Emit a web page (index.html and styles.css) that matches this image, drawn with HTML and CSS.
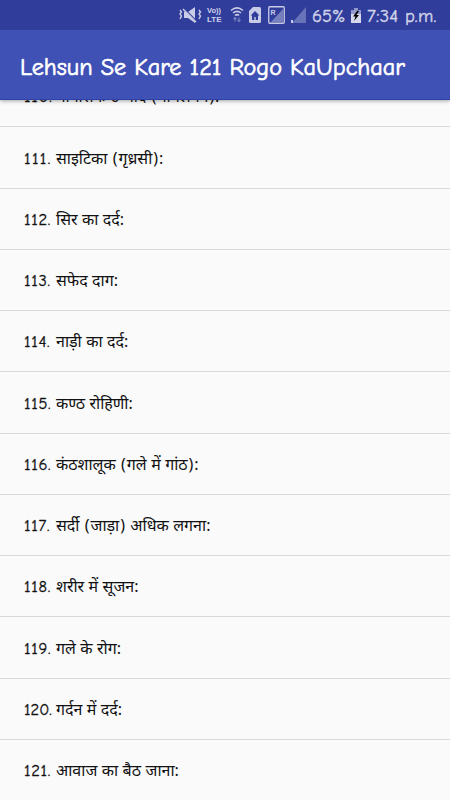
FILE: index.html
```html
<!DOCTYPE html>
<html lang="hi">
<head>
<meta charset="utf-8">
<title>Lehsun Se Kare 121 Rogo KaUpchaar</title>
<link rel="stylesheet" href="styles.css">
</head>
<body>
<header class="top">
  <div class="status">
    <svg class="mute" width="24" height="18" viewBox="0 0 24 18"><path d="M5 6h4l7-5v16l-7-5H5z" fill="#c9cce6"/><path d="M5.500 3l12 12" stroke="#303d9b" stroke-width="1.2"/><path d="M4 3l13 13" stroke="#c9cce6" stroke-width="1.5"/><path d="M1 4l1.5 2L1 8l1.5 2L1 13M20 4l1.5 2L20 8l1.5 2L20 13" fill="none" stroke="#c9cce6" stroke-width="1.4"/></svg>
    <span class="volte"><span>Vo))</span><span class="lte">LTE</span></span>
    <svg class="wifi" width="14" height="16" viewBox="0 0 14 16"><path d="M1 3.500Q7-1.800 13 3.500M3 6Q7 2.700 11 6M5 8.500Q7 6.600 9 8.500" fill="none" stroke="#c9cce6" stroke-width="1.6"/><path d="M5 10.500v4M3.500 12L5 10.500 6.500 12M9 10.500v4M7.500 13L9 14.500 10.500 13" fill="none" stroke="#7780bf" stroke-width="1.200"/></svg>
    <svg class="sim" width="12" height="16" viewBox="0 0 12 16"><path d="M4 0h6.500Q12 0 12 1.500v13Q12 16 10.500 16h-9Q0 16 0 14.500V4z" fill="#c9cce6"/><path d="M6 4L1.500 8.500H3V13h2.300v-3h1.400v3H9V8.500h1.500z" fill="#303d9b"/></svg>
    <svg class="roam" width="17" height="18" viewBox="0 0 17 18"><rect x=".75" y=".75" width="15.500" height="16.500" rx="1" fill="none" stroke="#c9cce6" stroke-width="1.300"/><path d="M15 3v13H3z" fill="#7780bf"/><text class="roam-label" x="2.500" y="9">R</text></svg>
    <svg class="signal" width="15" height="16" viewBox="0 0 15 16"><path d="M15 0v16H1z" fill="#6873b9"/><path d="M0 13h2v3H0z" fill="#c9cce6"/></svg>
    <span class="percent">65%</span>
    <svg class="battery" width="10" height="15" viewBox="0 0 10 15"><path d="M3 0h4v2h3v5H0V2h3z" fill="#9299ca"/><path d="M0 6h10v9H0z" fill="#d7d9ed"/><path d="M6.500 2.500L2 8.500h2.500L3 13l5-6H5.500L8 3z" fill="#000"/></svg>
    <span class="clock">7:34 p.m.</span>
  </div>
  <h1 class="title">Lehsun Se Kare 121 Rogo KaUpchaar</h1>
</header>
<ul class="list">
  <li><span class="num">110.</span><span>मानसिक उन्माद <span class="paren">(</span>पागलपन<span class="paren">)</span>:</span></li>
  <li><span class="num ones">111.</span><span>साइटिका <span class="paren">(</span>गृध्रसी<span class="paren">)</span>:</span></li>
  <li><span class="num">112.</span><span>सिर का दर्द:</span></li>
  <li><span class="num">113.</span><span>सफेद दाग:</span></li>
  <li><span class="num">114.</span><span>नाड़ी का दर्द:</span></li>
  <li><span class="num">115.</span><span>कण्ठ रोहिणी:</span></li>
  <li><span class="num">116.</span><span>कंठशालूक <span class="paren">(</span>गले में गांठ<span class="paren">)</span>:</span></li>
  <li><span class="num">117.</span><span>सर्दी <span class="paren">(</span>जाड़ा<span class="paren">)</span> अधिक लगना:</span></li>
  <li><span class="num">118.</span><span>शरीर में सूजन:</span></li>
  <li><span class="num">119.</span><span>गले के रोग:</span></li>
  <li><span class="num wide">120.</span><span>गर्दन में दर्द:</span></li>
  <li><span class="num">121.</span><span>आवाज का बैठ जाना:</span></li>
</ul>
</body>
</html>
```
FILE: styles.css
```css
* { box-sizing: border-box; }
body {
  margin: 0;
  height: 800px;
  overflow: hidden;
  background: #fafafa;
  font-family: "Noto Sans", sans-serif;
}
.top {
  position: relative;
  z-index: 1;
  height: 100px;
  background: #3f51b5;
  border-bottom: 1px solid #2c40a8;
  box-shadow: 0 1px 4px rgba(0, 0, 0, .35);
  color: #fff;
  font-family: "Comic Neue", "Comic Sans MS", fantasy;
}
.status {
  display: flex;
  align-items: center;
  height: 30px;
  padding-left: 179px;
  background: #303d9b;
  color: #d0d3ea;
  white-space: nowrap;
}
.status svg { flex: none; }
.volte {
  display: flex;
  flex-direction: column;
  width: 16px;
  margin-left: 4px;
  font: bold 7.5px/9px "Liberation Sans", sans-serif;
}
.lte { font-size: 8px; }
.wifi { margin-left: 7px; }
.sim { margin-left: 5px; }
.roam { margin-left: 7px; }
.roam-label { font: bold 7px "Liberation Sans", sans-serif; fill: #c9cce6; }
.signal { margin-left: 6px; }
.percent, .clock {
  padding-top: 2px;
  font-size: 18.5px;
  line-height: 28px;
  -webkit-text-stroke: .4px;
}
.percent { width: 33px; margin-left: 6px; }
.battery { margin-left: 6px; }
.clock { margin-left: 6px; letter-spacing: .3px; }
.title {
  margin: 0;
  padding: 2px 0 0 20px;
  font-size: 24.2px;
  font-weight: 400;
  line-height: 70px;
  white-space: nowrap;
  -webkit-text-stroke: .7px;
}
.list {
  margin: -34px 0 0;
  padding: 0;
  list-style: none;
}
.list li {
  display: flex;
  align-items: baseline;
  height: 61.25px;
  padding: 18.25px 0 0 24px;
  border-bottom: 1px solid #d9d9d9;
  color: #111;
  font-size: 16px;
  line-height: 24px;
  word-spacing: .3px;
}
.num {
  width: 32px;
  font-family: "Comic Neue", "Comic Sans MS", fantasy;
  font-size: 16.5px;
  letter-spacing: .7px;
  -webkit-text-stroke: .3px;
}
.num.ones { letter-spacing: 1.4px; }
.num.wide { letter-spacing: 0; }
.paren { padding: 0 .9px; }
```
